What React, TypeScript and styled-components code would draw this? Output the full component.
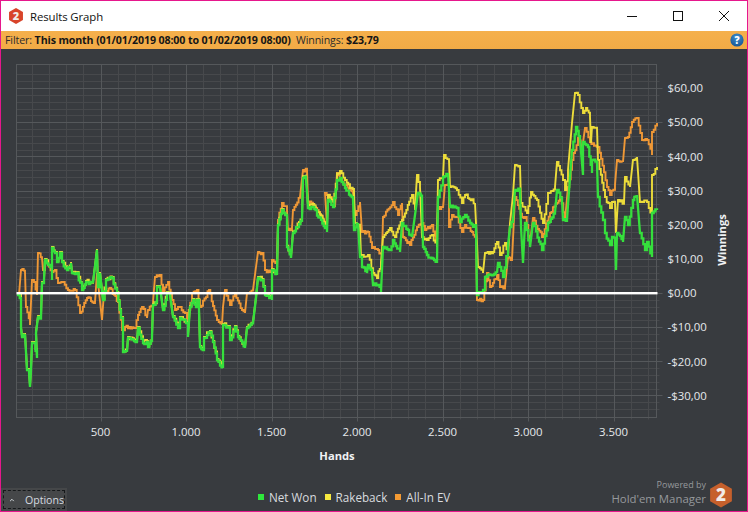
import React from "react";
import styled, { createGlobalStyle } from "styled-components";

const Global = createGlobalStyle`
  html, body { margin: 0; padding: 0; background: #383b3f; }
  * { box-sizing: border-box; }
`;

const Win = styled.div`
  width: 748px; height: 512px; border: 1px solid #e6178c;
  display: flex; flex-direction: column; overflow: hidden;
  background: #383b3f; font-family: "Open Sans", "Noto Sans", sans-serif;
`;
const TitleBar = styled.div`
  height: 30px; flex: none; background: #fff; display: flex; align-items: center;
  padding-left: 7px; color: #111; font-size: 11.4px; letter-spacing: -0.1px;
`;
const TitleText = styled.span` margin-left: 6px; flex: 1; `;
const WinBtn = styled.div`
  width: 46px; height: 30px; display: flex; align-items: center; justify-content: center;
`;
const FilterBar = styled.div`
  height: 18px; flex: none; background: linear-gradient(#f5b04c, #f2ab46);
  display: flex; align-items: center; padding: 0 3px 0 4px;
  font-size: 10.65px; color: #2b2b2b; letter-spacing: -0.12px; white-space: pre;
`;
const Strong = styled.b` font-weight: 700; color: #161616; `;
const Help = styled.svg` margin-left: auto; `;
const Chart = styled.svg` display: block; width: 746px; height: 430px; flex: none; `;
const Footer = styled.div`
  height: 32px; flex: none; display: flex; align-items: flex-end; position: relative;
`;
const OptionsBtn = styled.div`
  width: 66px; height: 23px; background: #454749; padding: 2px; flex: none;
  color: #d5dbe0; font-size: 10.6px;
`;
const OptionsInner = styled.div`
  height: 100%; border: 1px dashed #15181a; display: flex; align-items: center; padding-left: 5px; gap: 10px;
`;
const Legend = styled.div`
  margin-left: 191px; height: 23px; display: flex; align-items: center; gap: 8px; color: #d9dcdf; font-size: 11.7px;
  padding-bottom: 6px;
`;
const LegendItem = styled.span` display: flex; align-items: center; gap: 5px; `;
const Swatch = styled.i<{ $c: string }>`
  display: block; width: 6px; height: 6px; background: ${(p) => p.$c};
`;
const Brand = styled.div`
  margin-left: auto; display: flex; align-items: flex-end; gap: 3px; padding: 0 14px 3px 0;
`;
const BrandText = styled.div`
  display: flex; flex-direction: column; align-items: flex-end; color: #96999c; line-height: 13px; padding-bottom: 2px;
`;
const Powered = styled.span` font-size: 9px; `;
const Holdem = styled.span` font-size: 11.4px; line-height: 15px; `;

type P = [number, number];
const g = (s: string): P[] => s.trim().split(/\s+/).map((t) => t.split(",").map(Number) as P);

const green = g(`17,295 21,297 21,328 22,337 25,334 27,370 29,372 30,387 31,370 32,343 34,343 37,358 36,333 38,317 41,317 42,283 44,280 45,260 50,267 52,280 52,248 55,253 57,262 60,253 62,262 67,270 71,263 72,273 77,273 82,290 86,282 93,283 97,250 98,287 100,273 103,300 106,280 112,278 117,293 121,318 123,317 123,352 127,352 128,338 137,342 138,328 143,343 147,342 148,347 152,337 153,305 157,302 157,287 160,287 163,310 167,293 170,295 173,317 178,328 180,318 186,323 188,337 190,307 193,300 196,307 197,300 199,310 200,347 204,350 204,338 210,332 213,342 217,360 223,368 223,325 228,327 230,340 235,327 238,337 245,348 247,328 253,323 256,298 258,278 262,280 265,295 272,300 272,270 277,275 278,225 282,210 287,220 287,247 291,258 293,233 302,220 303,178 306,177 308,208 313,207 325,228 327,232 328,200 333,207 337,180 340,178 345,188 353,198 354,230 358,223 360,257 362,267 367,273 368,265 372,273 373,285 378,285 381,292 383,247 390,250 393,240 400,252 402,223 412,237 418,193 422,197 423,247 427,255 437,263 438,197 443,177 448,173 450,207 457,208 460,222 465,215 470,223 476,228 477,295 483,290 485,277 497,273 498,263 503,277 508,245 510,227 513,220 515,190 520,190 521,227 523,263 525,223 530,247 533,223 542,250 548,223 555,213 557,190 562,200 563,220 567,220 568,205 572,150 576,127 580,140 583,175 583,142 588,147 592,173 592,160 597,163 598,197 603,220 605,233 610,245 612,237 615,238 616,270 617,233 623,242 625,217 628,225 633,200 637,195 640,233 645,250 647,242 652,257 652,213 657,210`);

const orange = g(`17,295 19,295 21,270 25,272 26,307 30,325 32,280 34,282 37,295 38,253 42,258 43,270 45,260 52,272 55,270 58,283 63,282 68,290 75,290 80,313 87,298 95,302 97,273 102,320 104,292 110,288 118,302 122,330 125,327 135,328 138,315 142,307 147,318 148,310 153,302 155,277 160,275 163,292 168,282 172,300 175,310 178,307 180,307 185,313 187,320 192,293 197,290 200,307 209,290 217,320 222,325 223,307 225,290 230,305 235,293 242,310 245,313 247,293 253,290 256,267 258,252 262,253 265,270 270,272 272,260 277,267 278,220 282,203 287,210 288,230 292,228 293,210 300,197 303,170 307,170 308,202 313,205 327,225 325,193 330,197 335,207 337,173 345,185 353,193 355,215 360,202 362,232 368,232 372,248 378,250 382,257 383,217 393,202 398,215 402,203 403,237 410,245 417,227 422,223 425,230 432,225 436,243 438,207 443,208 445,185 449,183 449,227 452,215 457,217 462,232 465,225 472,232 476,240 477,300 483,300 487,273 490,287 497,275 500,287 505,287 508,257 512,260 515,197 522,217 525,217 530,243 533,218 542,237 550,213 560,197 565,220 568,187 572,160 578,138 582,150 585,128 590,142 598,147 607,187 610,195 615,185 617,160 623,162 625,138 628,137 632,122 637,118 642,140 647,140 652,155 652,132 657,123`);

const yellowTail = g(`350,188 354,192 355,223 360,227 361,257 368,255 373,273 377,278 381,262 383,237 390,228 395,237 402,220 412,195 415,210 417,175 420,187 422,237 427,240 432,235 437,247 438,180 443,178 444,155 449,160 450,187 457,190 462,203 465,195 475,203 477,243 478,267 483,273 485,253 493,252 497,242 500,255 505,243 508,257 510,223 513,195 515,165 520,165 521,203 527,213 531,192 537,200 543,223 548,193 555,187 557,162 563,180 565,190 568,170 572,123 575,93 578,95 583,113 586,108 590,117 591,143 592,127 597,128 598,160 605,197 610,208 612,202 615,202 616,233 618,200 624,203 625,177 630,187 633,160 637,157 640,202 647,202 652,217 652,175 657,167`);

const yOffset = (x: number) => (x < 275 ? 1 : 1 + ((x - 275) / 75) ** 2 * 8);
const yellow: P[] = [
  ...green.filter(([x]) => x < 350).map(([x, y]): P => [x, y - yOffset(x)]),
  ...yellowTail,
];

// Turns the hand-read points into the stepped, per-hand wiggle of the line.
function rough(points: P[], seed: number): string {
  let s = seed;
  const rnd = () => {
    s = (s * 16807) % 2147483647;
    return s / 2147483647 - 0.5;
  };
  const out: string[] = [];
  points.forEach(([x, y], i) => {
    out.push(`${x},${y}`);
    const next = points[i + 1];
    if (!next) return;
    const dx = next[0] - x;
    const dy = next[1] - y;
    const n = Math.floor(Math.abs(dx) / 1.3);
    if (Math.abs(dy) > Math.abs(dx) * 7) return;
    let prev = y;
    for (let k = 1; k < n; k++) {
      const t = k / n;
      const px = x + dx * t;
      const py = y + dy * t + rnd() * 3.4;
      out.push(`${px.toFixed(1)},${prev.toFixed(1)}`);
      out.push(`${px.toFixed(1)},${py.toFixed(1)}`);
      prev = py;
    }
    out.push(`${next[0]},${prev.toFixed(1)}`);
  });
  return out.join(" ");
}

const L = 16.5, R = 656.5, T = 64.5, B = 417.5;
const Y0 = 293, YS = 34.15;
const X0 = 15, XS = 17.1;
const yLabels = [60, 50, 40, 30, 20, 10, 0, -10, -20, -30];
const xLabels = ["500", "1.000", "1.500", "2.000", "2.500", "3.000", "3.500"];

const minorY: number[] = [];
for (let i = -22; i <= 32; i++) {
  const y = Math.round(Y0 - (i * YS) / 5) + 0.5;
  if (i % 5 !== 0 && y > T + 4 && y < B - 2) minorY.push(y);
}
const majorY = yLabels.map((v) => Math.round(Y0 - (v / 10) * YS) + 0.5);
const minorX: number[] = [];
const majorX: number[] = [];
for (let i = 1; i <= 37; i++) {
  const x = Math.round(X0 + i * XS) + 0.5;
  (i % 5 === 0 ? majorX : minorX).push(x);
}

const Hex = ({ cx, cy, r, fill, size }: { cx: number; cy: number; r: number; fill: string; size: number }) => {
  const w = r * 0.87;
  return (
    <>
      <polygon
        points={`${cx},${cy - r} ${cx + w},${cy - r / 2} ${cx + w},${cy + r / 2} ${cx},${cy + r} ${cx - w},${cy + r / 2} ${cx - w},${cy - r / 2}`}
        fill={fill}
      />
      <text x={cx} y={cy + size * 0.36} fontSize={size} fontWeight={800} fill="#f1ece8" textAnchor="middle" fontFamily="'Open Sans', sans-serif">
        2
      </text>
    </>
  );
};

const App = () => (
  <Win>
    <Global />
    <TitleBar>
      <svg width="16" height="18" viewBox="0 0 16 18">
        <Hex cx={8} cy={9} r={8} fill="#d8442a" size={11} />
      </svg>
      <TitleText>Results Graph</TitleText>
      <WinBtn>
        <svg width="12" height="12" viewBox="0 0 12 12"><path d="M1 6.5H11" stroke="#111" strokeWidth="1" /></svg>
      </WinBtn>
      <WinBtn>
        <svg width="12" height="12" viewBox="0 0 12 12"><rect x="1.5" y="1.5" width="9" height="9" fill="none" stroke="#111" /></svg>
      </WinBtn>
      <WinBtn>
        <svg width="12" height="12" viewBox="0 0 12 12"><path d="M1 1L11 11M11 1L1 11" stroke="#111" strokeWidth="1" /></svg>
      </WinBtn>
    </TitleBar>
    <FilterBar>
      Filter: <Strong>This month (01/01/2019 08:00 to 01/02/2019 08:00)</Strong>  Winnings: <Strong>$23,79</Strong>
      <Help width="14" height="14" viewBox="0 0 14 14">
        <defs>
          <radialGradient id="helpG" cx="0.5" cy="0.3" r="0.8">
            <stop offset="0" stopColor="#3f8fd0" />
            <stop offset="1" stopColor="#124f8c" />
          </radialGradient>
        </defs>
        <circle cx="7" cy="7" r="6.6" fill="url(#helpG)" />
        <text x="7" y="10.5" fontSize="10" fontWeight="800" fill="#fff" textAnchor="middle" fontFamily="'Open Sans', sans-serif">?</text>
      </Help>
    </FilterBar>
    <Chart viewBox="1 49 746 430">
      <g stroke="#47494c" strokeWidth="1" fill="none">
        {minorY.map((y) => <path key={y} d={`M${L} ${y}H${R + 3}`} />)}
        {minorX.map((x) => <path key={x} d={`M${x} ${T}V${B + 2}`} />)}
      </g>
      <g stroke="#55585b" strokeWidth="1" fill="none">
        {majorY.map((y) => <path key={y} d={`M${L} ${y}H${R + 6}`} />)}
        {majorX.map((x) => <path key={x} d={`M${x} ${T}V${B + 4}`} />)}
        <rect x={L} y={T} width={R - L} height={B - T} />
      </g>
      <polyline points={rough(orange, 101)} fill="none" stroke="#ef9836" strokeWidth="1.9" />
      <polyline points={rough(yellow, 7331)} fill="none" stroke="#ecdc3a" strokeWidth="1.9" />
      <polyline points={rough(green, 4242)} fill="none" stroke="#35e03c" strokeWidth="2.3" />
      <rect x={L} y={292} width={R - L + 1} height={2.4} fill="#fff" />
      <g fill="#e6e9ec" fontSize="11.4" fontFamily="'Open Sans', sans-serif">
        {yLabels.map((v) => (
          <text key={v} x="667.5" y={Y0 - (v / 10) * YS + 4.2}>
            {v < 0 ? `-$${-v},00` : `$${v},00`}
          </text>
        ))}
        {xLabels.map((t, i) => (
          <text key={t} x={X0 + (i + 1) * 5 * XS} y="436" textAnchor="middle">{t}</text>
        ))}
      </g>
      <g fill="#f0f2f4" fontSize="11.2" fontWeight="700" fontFamily="'Open Sans', sans-serif">
        <text x="337" y="460" textAnchor="middle">Hands</text>
        <text transform="translate(726 240) rotate(-90)" textAnchor="middle">Winnings</text>
      </g>
    </Chart>
    <Footer>
      <OptionsBtn>
        <OptionsInner>
          <svg width="8" height="6" viewBox="0 0 8 6"><path d="M1.5 4.5L4 2L6.5 4.5" fill="none" stroke="#d5dbe0" strokeWidth="1.3" /></svg>
          <span>Options</span>
        </OptionsInner>
      </OptionsBtn>
      <Legend>
        <LegendItem><Swatch $c="#2ee83c" />Net Won</LegendItem>
        <LegendItem><Swatch $c="#f7e93f" />Rakeback</LegendItem>
        <LegendItem><Swatch $c="#f49a33" />All-In EV</LegendItem>
      </Legend>
      <Brand>
        <BrandText>
          <Powered>Powered by</Powered>
          <Holdem>Hold'em Manager</Holdem>
        </BrandText>
        <svg width="24" height="26" viewBox="0 0 24 26">
          <Hex cx={12} cy={13} r={12.5} fill="#c6602c" size={17} />
        </svg>
      </Brand>
    </Footer>
  </Win>
);

export default App;
